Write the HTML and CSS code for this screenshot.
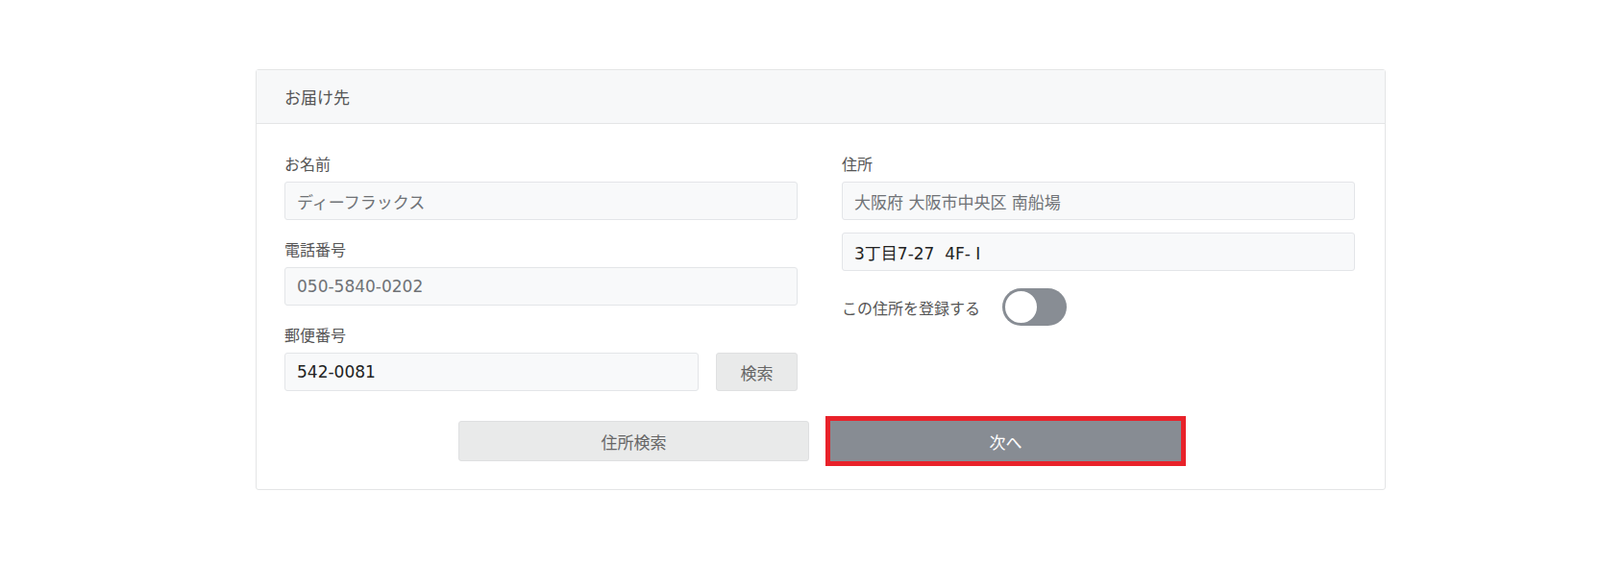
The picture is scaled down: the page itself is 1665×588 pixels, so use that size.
FILE: index.html
```html
<!DOCTYPE html>
<html lang="ja">
<head>
  <meta charset="UTF-8">
  <title>お届け先</title>
  <link rel="stylesheet" href="styles.css">
</head>
<body>
  <div class="page">
    <div class="card">
      <div class="card-header">お届け先</div>
      <div class="card-body">
        <div class="cols">
          <div class="col">
            <div class="field">
              <label class="label">お名前</label>
              <input class="input muted" type="text" value="ディーフラックス">
            </div>
            <div class="field">
              <label class="label">電話番号</label>
              <input class="input muted" type="text" value="050-5840-0202">
            </div>
            <div class="field">
              <label class="label">郵便番号</label>
              <div class="zip-row">
                <input class="input" type="text" value="542-0081">
                <button class="btn btn-light btn-small">検索</button>
              </div>
            </div>
          </div>
          <div class="col">
            <div class="field">
              <label class="label">住所</label>
              <input class="input muted" type="text" value="大阪府 大阪市中央区 南船場">
              <input class="input addr2" type="text" value="3丁目7-27  4F- I">
            </div>
            <div class="toggle-row">
              <span class="toggle-label">この住所を登録する</span>
              <span class="toggle"><span class="knob"></span></span>
            </div>
          </div>
        </div>
        <div class="actions">
          <button class="btn btn-light btn-wide">住所検索</button>
          <button class="btn btn-dark btn-wide highlight">次へ</button>
        </div>
      </div>
    </div>
  </div>
</body>
</html>
```

FILE: styles.css
```css
*{
  box-sizing: border-box;
}
body{
  margin: 0;
  background: #fff;
  font-family: "Noto Sans CJK JP", "Noto Sans", sans-serif;
  font-size: 16px;
  color: #555;
}
.page{
  padding: 72px 0 0 266px;
}
.card{
  width: 1176px;
  border: 1px solid #e4e5e6;
  border-radius: 3px;
  background: #fff;
}
.card-header{
  height: 56px;
  line-height: 56px;
  padding-left: 29px;
  background: #f7f8f9;
  border-bottom: 1px solid #e4e5e6;
  font-size: 17px;
  color: #555;
}
.card-body{
  padding: 29px 31px 29px 29px;
}
.cols{
  display: grid;
  grid-template-columns: 1fr 1fr;
  column-gap: 46px;
}
.field{
  margin-bottom: 18px;
}
.label{
  display: block;
  height: 24px;
  line-height: 24px;
  margin-bottom: 7px;
  color: #555;
}
.input{
  display: block;
  width: 100%;
  height: 40px;
  padding: 0 12px;
  border: 1px solid #e3e5e8;
  border-radius: 3px;
  background: #f8f9fa;
  font-family: "DejaVu Sans", "Noto Sans CJK JP", sans-serif;
  font-size: 17px;
  color: #222;
  outline: none;
  white-space: pre;
}
.input.muted{
  color: #6f7276;
}
.addr2{
  margin-top: 13px;
}
.zip-row{
  display: flex;
  gap: 18px;
}
.zip-row .input{
  flex: 1;
}
.btn{
  height: 40px;
  border: 1px solid #dfe0e1;
  border-radius: 3px;
  font-family: inherit;
  font-size: 17px;
  cursor: pointer;
}
.btn-light{
  background: #e9eaea;
  color: #666;
}
.btn-dark{
  background: #878c93;
  border-color: #878c93;
  color: #fff;
}
.btn-small{
  width: 85px;
}
.toggle-row{
  display: flex;
  align-items: center;
  gap: 23px;
  margin-top: 4px;
}
.toggle-label{
  color: #555;
}
.toggle{
  display: inline-block;
  width: 67px;
  height: 39px;
  border-radius: 20px;
  background: #888d94;
  padding: 1px;
}
.knob{
  display: block;
  width: 37px;
  height: 37px;
  border-radius: 50%;
  background: #fff;
  border: 2px solid #888d94;
}
.actions{
  display: flex;
  justify-content: center;
  gap: 22px;
  margin-top: 13px;
}
.btn-wide{
  width: 365px;
  height: 42px;
}
.highlight{
  border-radius: 0;
  outline: 5px solid #e8222a;
}
```
